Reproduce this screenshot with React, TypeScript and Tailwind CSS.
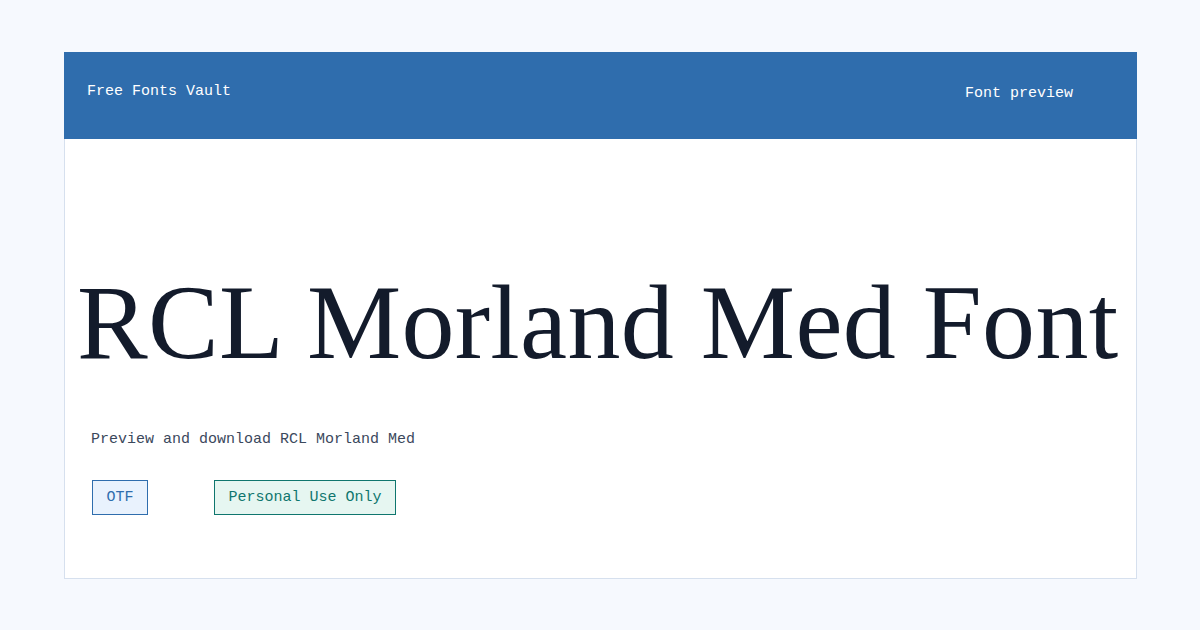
import React from "react";

const mono = { fontFamily: '"Liberation Mono", "DejaVu Sans Mono", monospace' };
const serif = { fontFamily: '"Liberation Serif", "DejaVu Serif", serif' };

function FontCard() {
	return (
		<div className="w-[1073px] h-[527px] bg-white border-x border-b border-[#d6e0ee] flex flex-col">
			<div className="-mx-px h-[87px] bg-[#2f6dad] text-white flex justify-between pl-[23px] pr-[64px] text-[15px]" style={mono}>
				<p className="mt-[29px]">Free Fonts Vault</p>
				<p className="mt-[31px]">Font preview</p>
			</div>
			<h1 className="mt-[131px] pl-[12px] text-[106px] leading-none tracking-[0.3px] text-[#131b2b] whitespace-nowrap" style={serif}>
				RCL Morland Med Font
			</h1>
			<p className="mt-[53px] pl-[26px] text-[15px] text-[#3b485c]" style={mono}>
				Preview and download RCL Morland Med
			</p>
			<div className="mt-[28px] pl-[27px] flex gap-[66px] text-[15px]" style={mono}>
				<span className="h-[35px] px-[13.5px] pt-[2px] flex items-center border border-[#2f6dad] bg-[#e9f2fd] text-[#2f6dad]">OTF</span>
				<span className="h-[35px] px-[13.5px] pt-[2px] flex items-center border border-[#0f766e] bg-[#e6f6f1] text-[#0f766e]">Personal Use Only</span>
			</div>
		</div>
	);
}

export default function App() {
	return (
		<div className="w-[1200px] h-[630px] bg-[#f6f9fe] pt-[52px] pl-[64px]">
			<FontCard />
		</div>
	);
}
